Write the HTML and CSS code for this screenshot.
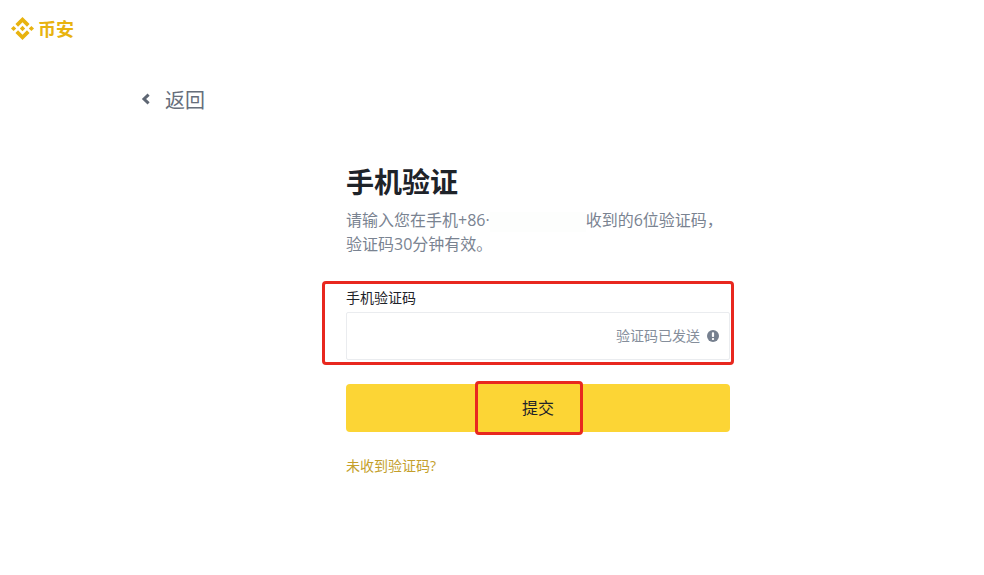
FILE: index.html
```html
<!DOCTYPE html>
<html lang="zh-CN">
<head>
    <meta charset="UTF-8">
    <title>手机验证</title>
    <link rel="stylesheet" href="styles.css">
</head>
<body>
    <div class="header">
        <svg class="logo-mark" viewBox="0 0 126.61 126.61" aria-hidden="true">
            <path d="M38.73 53.2 63.31 28.62 87.91 53.22 102.21 38.91 63.31 0 24.42 38.9z"/>
            <path d="M0 63.31 14.3 49 28.61 63.31 14.3 77.61z"/>
            <path d="M38.73 73.41 63.31 98 87.91 73.4 102.22 87.69 63.32 126.6 24.41 87.72z"/>
            <path d="M98 63.31 112.3 49 126.61 63.3 112.3 77.62z"/>
            <path d="M77.83 63.3 63.31 48.78 48.81 63.28 63.32 77.78z"/>
        </svg>
        <span class="logo-text">币安</span>
    </div>

    <div class="back">
        <svg class="back-icon" viewBox="0 0 10 12" aria-hidden="true">
            <path d="M7.6 1.6 L3 6 L7.6 10.4"/>
        </svg>
        <span>返回</span>
    </div>

    <div class="form">
        <h1 class="title">手机验证</h1>
        <p class="desc">请输入您在手机+86·<span class="masked"></span>收到的6位验证码，<br>验证码30分钟有效。</p>

        <div class="field">
            <div class="field-label">手机验证码</div>
            <div class="field-input">
                <span class="sent">验证码已发送</span>
                <svg class="sent-icon" viewBox="0 0 12 12" aria-hidden="true">
                    <circle cx="6" cy="6" r="6"/>
                    <rect x="4.9" y="2.2" width="2.2" height="4.8" rx="0.8" fill="#fff"/>
                    <rect x="4.9" y="8" width="2.2" height="2" rx="0.8" fill="#fff"/>
                </svg>
            </div>
            <div class="mark mark-field"></div>
        </div>

        <div class="submit">
            提交
            <div class="mark mark-submit"></div>
        </div>

        <div class="resend">未收到验证码?</div>
    </div>
</body>
</html>
```

FILE: styles.css
```css
body {
    margin: 0;
    height: 575px;
    overflow: hidden;
    background: #fff;
    color: #1e2329;
    font-family: "Open Sans", "Noto Sans CJK SC", sans-serif;
}
.header {
    display: flex;
    align-items: center;
    height: 24px;
    padding: 16px 0 0 11px;
}
.logo-mark {
    width: 23px;
    height: 23px;
    fill: #e8b30f;
}
.logo-text {
    margin-left: 4px;
    font-size: 18px;
    font-weight: 700;
    color: #e8b30f;
}
.back {
    display: flex;
    align-items: center;
    height: 30px;
    margin-top: 44px;
    padding-left: 141px;
    font-size: 20px;
    color: #666e7b;
}
.back-icon {
    width: 10px;
    height: 12px;
    margin-right: 14px;
    fill: none;
    stroke: #5e6673;
    stroke-width: 3;
}
.form {
    width: 384px;
    margin: 50px 0 0 346px;
}
.title {
    margin: 0;
    font-size: 28px;
    line-height: 36px;
    font-weight: 700;
}
.desc {
    margin: 8px 0 0;
    font-size: 16px;
    line-height: 24px;
    color: #7a8391;
    white-space: nowrap;
}
.masked {
    display: inline-block;
    width: 96px;
    height: 20px;
    vertical-align: middle;
    background: #fdfefd;
}
.field {
    position: relative;
    margin-top: 31px;
}
.field-label {
    font-size: 14px;
    line-height: 22px;
}
.field-input {
    display: flex;
    align-items: center;
    justify-content: flex-end;
    box-sizing: border-box;
    height: 48px;
    margin-top: 3px;
    padding-right: 10px;
    border: 1px solid #eaecef;
    border-radius: 2px;
}
.sent {
    margin-bottom: 2px;
    font-size: 14px;
    color: #858e9b;
}
.sent-icon {
    width: 12px;
    height: 12px;
    margin-left: 7px;
    fill: #76808f;
}
.submit {
    position: relative;
    display: flex;
    align-items: center;
    justify-content: center;
    box-sizing: border-box;
    height: 48px;
    margin-top: 24px;
    padding-bottom: 2px;
    border-radius: 4px;
    background: #fcd535;
    font-size: 16px;
}
.resend {
    margin-top: 24px;
    font-size: 14px;
    line-height: 20px;
    color: #c49f2c;
}
/* red annotation boxes drawn over the form */
.mark {
    position: absolute;
    box-sizing: border-box;
    border: 3px solid #e8281f;
    border-radius: 4px;
}
.mark-field {
    left: -24px;
    top: -6px;
    width: 412px;
    height: 84px;
}
.mark-submit {
    left: 129px;
    top: -3px;
    width: 108px;
    height: 54px;
}
```
